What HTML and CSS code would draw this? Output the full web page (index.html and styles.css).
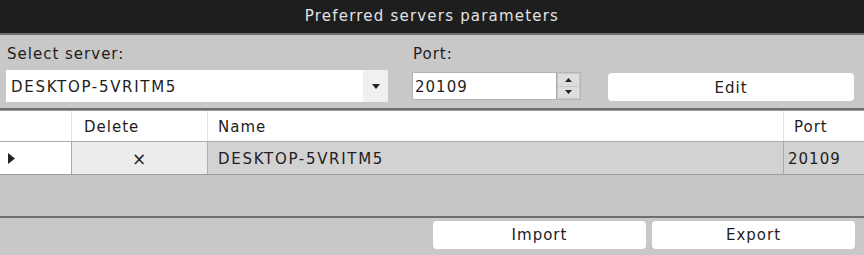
FILE: index.html
```html
<!DOCTYPE html>
<html>
<head>
<meta charset="utf-8">
<link rel="stylesheet" href="styles.css">
</head>
<body>
<div class="window">
  <div class="title">Preferred servers parameters</div>
  <div class="controls">
    <div class="field server-field">
      <div class="label">Select server:</div>
      <div class="combo">
        <span class="combo-text caps">DESKTOP-5VRITM5</span>
        <span class="combo-arrow"><svg width="8" height="5" viewBox="0 0 8 5"><path d="M0 0H8L4 5Z" fill="#222"/></svg></span>
      </div>
    </div>
    <div class="field port-field">
      <div class="label">Port:</div>
      <div class="spin">
        <span class="spin-text">20109</span>
        <span class="spin-btns">
          <span class="spin-btn"><svg width="7" height="4" viewBox="0 0 7 4"><path d="M0 4H7L3.5 0Z" fill="#222"/></svg></span>
          <span class="spin-btn"><svg width="7" height="4" viewBox="0 0 7 4"><path d="M0 0H7L3.5 4Z" fill="#222"/></svg></span>
        </span>
      </div>
    </div>
    <div class="field edit-field">
      <button class="btn edit-btn">Edit</button>
    </div>
  </div>
  <div class="grid">
    <div class="row header">
      <div class="cell rh"></div>
      <div class="cell c-del">Delete</div>
      <div class="cell c-name">Name</div>
      <div class="cell c-port">Port</div>
    </div>
    <div class="row data">
      <div class="cell rh"><svg width="7" height="11" viewBox="0 0 7 11"><path d="M0 0L7 5.5L0 11Z" fill="#222"/></svg></div>
      <div class="cell c-del center">×</div>
      <div class="cell c-name caps">DESKTOP-5VRITM5</div>
      <div class="cell c-port">20109</div>
    </div>
    <div class="grid-empty"></div>
  </div>
  <div class="footer">
    <button class="btn import-btn">Import</button>
    <button class="btn export-btn">Export</button>
  </div>
</div>
</body>
</html>
```
FILE: styles.css
```css
* { box-sizing: border-box; }
html, body { margin: 0; padding: 0; }
body {
  width: 864px;
  height: 255px;
  background: #c7c7c7;
  font-family: "DejaVu Sans", Verdana, sans-serif;
  font-size: 15px;
  letter-spacing: 1px;
  color: #231c1c;
  overflow: hidden;
}
.window { display: flex; flex-direction: column; height: 255px; }
.title {
  height: 35px;
  flex: none;
  background: #1e1e1e;
  color: #e2e2e2;
  text-align: center;
  line-height: 33px;
  font-size: 15px;
  letter-spacing: 1.2px;
  border-bottom: 2px solid #6f6f6f;
}
.controls {
  display: flex;
  align-items: flex-start;
  padding: 9px 10px 0 6px;
  height: 75px;
  flex: none;
  background: #c8c8c8;
  border-bottom: 2px solid #6d6d6d;
}
.field { display: flex; flex-direction: column; }
.label { height: 20px; line-height: 20px; padding-left: 1px; margin-bottom: 6px; }
.server-field { width: 382px; }
.caps { letter-spacing: 1.7px; }
.combo {
  height: 32px;
  background: #fff;
  display: flex;
  align-items: center;
}
.combo-text { flex: 1; padding: 2px 0 0 5px; }
.combo-arrow {
  width: 25px;
  height: 32px;
  background: #f0f0f0;
  display: flex;
  align-items: center;
  justify-content: center;
}
.port-field { margin-left: 24px; width: 169px; }
.port-field .label { margin-bottom: 8px; }
.spin {
  height: 28px;
  background: #fff;
  border: 1px solid #b4b4b4;
  display: flex;
  align-items: center;
}
.spin-text { flex: 1; padding: 1px 0 0 2px; }
.spin-btns {
  width: 24px;
  height: 26px;
  display: flex;
  flex-direction: column;
  padding: 1px 0;
  gap: 1px;
  background: #c9c9c9;
  border-left: 1px solid #a8a8a8;
}
.spin-btn {
  flex: 1;
  display: flex;
  align-items: center;
  justify-content: center;
  background: #dedede;
  margin: 0 1px;
}
.edit-field { margin-left: 27px; margin-top: 29px; }
.btn {
  font-family: inherit;
  font-size: 15px;
  letter-spacing: 1px;
  color: #231c1c;
  background: #fff;
  border: none;
  border-radius: 4px;
  height: 28px;
  padding: 1px 0 0;
}
.edit-btn { width: 246px; }
.import-btn, .export-btn { padding: 0; }
.grid {
  display: flex;
  flex-direction: column;
  height: 108px;
  flex: none;
  background: #c6c6c6;
  border-bottom: 2px solid #6e6e6e;
}
.row { display: flex; }
.header { height: 32px; background: #fff; border-top: 1px solid #9a9a9a; border-bottom: 1px solid #aaa; }
.cell { display: flex; align-items: center; padding-left: 11px; padding-top: 2px; border-right: 1px solid #d8d8d8; }
.rh { width: 72px; padding-left: 8px; }
.c-del { width: 136px; padding-left: 12px; }
.c-name { width: 576px; padding-left: 10px; }
.c-port { flex: 1; padding-left: 10px; border-right: none; }
.header .cell { border-right-color: #e4e4e4; }
.data { height: 33px; border-bottom: 1px solid #9c9c9c; }
.data .cell { padding-top: 1px; }
.data .rh { background: #fff; border-right: 1px solid #a8a8a8; }
.data .c-del { background: #ececec; justify-content: center; padding-left: 0; border-right: 1px solid #b0b0b0; font-size: 17px; }
.data .c-name { background: #d2d2d2; border-right: 1px solid #a8a8a8; }
.data .c-port { background: #d2d2d2; padding-left: 4px; }
.grid-empty { flex: 1; }
.footer {
  display: flex;
  justify-content: flex-end;
  align-items: flex-start;
  gap: 6px;
  padding: 3px 9px 0 0;
  flex: 1;
  background: #c8c8c8;
}
.import-btn { width: 213px; }
.export-btn { width: 203px; }
```
